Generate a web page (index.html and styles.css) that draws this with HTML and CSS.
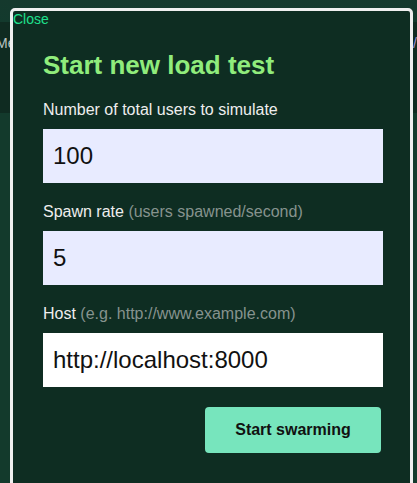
FILE: index.html
```html
<!DOCTYPE html>
<html>
<head>
<meta charset="utf-8">
<link rel="stylesheet" href="styles.css">
</head>
<body>
<div class="topbar"></div>
<div class="band"><span class="band-text">Metrics</span><span class="band-right">/</span></div>
<div class="page"></div>
<div class="modal">
  <a class="close">Close</a>
  <form class="form">
    <h2 class="title">Start new load test</h2>
    <label class="label">Number of total users to simulate</label>
    <input class="input lav" type="text" value="100">
    <label class="label">Spawn rate <span class="hint">(users spawned/second)</span></label>
    <input class="input lav" type="text" value="5">
    <label class="label">Host <span class="hint">(e.g. http://www.example.com)</span></label>
    <input class="input white" type="text" value="http://localhost:8000">
    <div class="actions"><button class="btn" type="button">Start swarming</button></div>
  </form>
</div>
</body>
</html>
```
FILE: styles.css
```css
html, body { margin: 0; padding: 0; }
body {
  width: 417px;
  height: 483px;
  overflow: hidden;
  background: #133a2c;
  font-family: "Liberation Sans", Arial, sans-serif;
}
.topbar {
  height: 22px;
  background: linear-gradient(#15392d, #133a2d);
}
.band {
  height: 91px;
  background: #0f2b21;
  display: flex;
  justify-content: space-between;
  align-items: flex-start;
  overflow: hidden;
}
.band-text {
  color: #b9c3c0;
  font-size: 14px;
  line-height: 16px;
  margin-top: 13px;
  margin-left: -4px;
}
.band-right {
  color: #a48fd6;
  font-size: 14px;
  line-height: 16px;
  margin-top: 13px;
}
.modal {
  position: absolute;
  left: 10px;
  top: 8px;
  width: 397px;
  height: 520px;
  border: 3px solid #efefef;
  border-radius: 5px;
  background: #0e2d22;
}
.close {
  display: block;
  color: #1fe08d;
  font-size: 14px;
  line-height: 16px;
}
.form {
  display: flex;
  flex-direction: column;
  padding: 0 27px 0 30px;
  margin: 0;
}
.title {
  margin: 23px 0 21px;
  font-size: 26px;
  line-height: 30px;
  font-weight: bold;
  color: #90ec7c;
}
.label {
  display: block;
  font-size: 16px;
  line-height: 18px;
  color: #eeeeee;
  margin-bottom: 10px;
}
.hint { color: #86938e; }
.input {
  box-sizing: border-box;
  width: 340px;
  height: 54px;
  border: none;
  outline: none;
  padding: 0 10px;
  margin: 0 0 20px;
  font-family: "Liberation Sans", Arial, sans-serif;
  font-size: 24px;
  color: #111111;
}
.lav { background: #e8ebff; }
.white { background: #ffffff; }
.actions {
  display: flex;
  justify-content: flex-end;
  padding-right: 2px;
}
.btn {
  width: 176px;
  height: 46px;
  border: none;
  border-radius: 4px;
  background: #77e5bd;
  color: #111111;
  font-family: "Liberation Sans", Arial, sans-serif;
  font-size: 16px;
  font-weight: bold;
}
```
